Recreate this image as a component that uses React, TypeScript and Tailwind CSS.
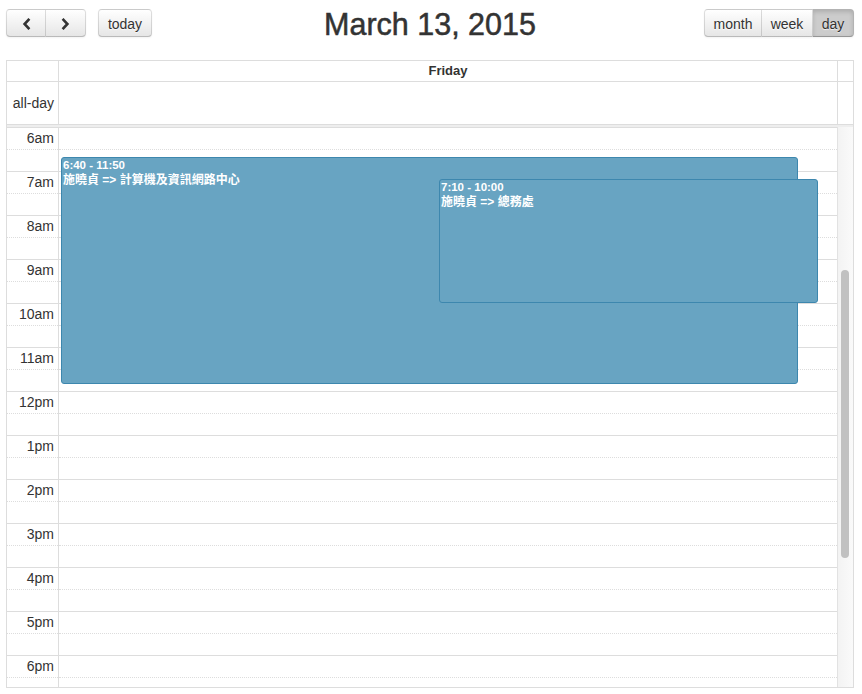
import React from 'react';

const hours = ['6am','7am','8am','9am','10am','11am','12pm','1pm','2pm','3pm','4pm','5pm','6pm'];

const btnBase =
  'h-[28px] pt-[2px] text-[14px] text-[#333] border border-[rgba(0,0,0,0.12)] border-b-[rgba(0,0,0,0.27)] shadow-[inset_0_1px_0_rgba(255,255,255,0.2),0_1px_2px_rgba(0,0,0,0.05)] flex items-center justify-center leading-none [text-shadow:0_1px_1px_rgba(255,255,255,0.75)]';
const btnNormal = 'bg-linear-to-b from-white to-[#e6e6e6]';
const btnActive = 'bg-[#cccccc] shadow-[inset_0_2px_4px_rgba(0,0,0,0.15),0_1px_2px_rgba(0,0,0,0.05)]';

function Chevron({ dir }: { dir: 'left' | 'right' }) {
  return (
    <svg width="9" height="12" viewBox="0 0 9 12" fill="none">
      {dir === 'left' ? (
        <path d="M6.5 1.8 L2.6 6 L6.5 10.2" stroke="#333" strokeWidth="2.6" strokeLinecap="square" strokeLinejoin="miter" />
      ) : (
        <path d="M2.5 1.8 L6.4 6 L2.5 10.2" stroke="#333" strokeWidth="2.6" strokeLinecap="square" strokeLinejoin="miter" />
      )}
    </svg>
  );
}

function Slots({ labels }: { labels: boolean }) {
  return (
    <>
      {hours.map((h) => (
        <React.Fragment key={h}>
          <div className="h-[22px] border-t border-[#dddddd] box-border">
            {labels && (
              <div className="text-right pr-[4px] text-[14px] leading-[20px] text-[#333] whitespace-nowrap">{h}</div>
            )}
          </div>
          <div className="h-[22px] border-t border-dotted border-[#dddddd] box-border" />
        </React.Fragment>
      ))}
    </>
  );
}

export default function App() {
  return (
    <div
      className="w-[862px] h-[694px] overflow-hidden bg-white text-[#333]"
      style={{ fontFamily: '"Liberation Sans", "Noto Sans CJK TC", Arial, sans-serif' }}
    >
      {/* Toolbar */}
      <div className="grid grid-cols-[1fr_auto_1fr] items-center pl-[6px] pr-[8px] pt-[8px] h-[36px] mb-[24px]">
        <div className="flex items-center gap-[12px]">
          <div className="flex">
            <button className={`${btnBase} ${btnNormal} w-[40px] rounded-l-[4px]`}>
              <Chevron dir="left" />
            </button>
            <button className={`${btnBase} ${btnNormal} w-[40px] rounded-r-[4px] border-l-0`}>
              <Chevron dir="right" />
            </button>
          </div>
          <button className={`${btnBase} ${btnNormal} w-[54px] rounded-[4px]`}>today</button>
        </div>
        <h2 className="text-[30.5px] leading-[28px] pt-[2px] font-normal text-[#333] [-webkit-text-stroke:0.5px_#333]">March 13, 2015</h2>
        <div className="flex justify-end">
          <button className={`${btnBase} ${btnNormal} w-[58px] rounded-l-[4px]`}>month</button>
          <button className={`${btnBase} ${btnNormal} w-[51px] border-l-0`}>week</button>
          <button className={`${btnBase} ${btnActive} w-[41px] rounded-r-[4px] border-l-0`}>day</button>
        </div>
      </div>

      {/* Calendar table */}
      <div className="mx-[6px] w-[848px] border border-[#dddddd] box-border">
        {/* Header row */}
        <div className="flex h-[21px] border-b border-[#dddddd] box-border">
          <div className="w-[52px] border-r border-[#dddddd] box-border" />
          <div className="flex-1 text-center text-[13px] font-bold leading-[20px]">Friday</div>
          <div className="w-[16px] border-l border-[#dddddd] box-border" />
        </div>
        {/* All-day row */}
        <div className="flex h-[42px]">
          <div className="w-[52px] border-r border-[#dddddd] box-border flex items-center justify-end pr-[4px] text-[14px]">
            all-day
          </div>
          <div className="flex-1" />
          <div className="w-[16px] border-l border-[#dddddd] box-border" />
        </div>
        {/* Divider */}
        <div className="h-[3px] border-t border-[#dddddd] bg-[#eeeeee] box-border" />
        {/* Scroller */}
        <div className="flex h-[560px] overflow-hidden">
          <div className="w-[52px] border-r border-[#dddddd] box-border">
            <Slots labels />
          </div>
          <div className="flex-1 relative">
            <Slots labels={false} />
            {/* Events */}
            <div className="absolute left-[2px] top-[30px] w-[737px] h-[227px] bg-[#68a4c2] border border-[#3d87ae] rounded-[3px] text-white px-[1px] overflow-hidden">
              <div className="text-[11.5px] font-bold leading-[14px] whitespace-nowrap">6:40 - 11:50</div>
              <div className="text-[12px] font-bold leading-[16px] whitespace-nowrap">施曉貞 =&gt; 計算機及資訊網路中心</div>
            </div>
            <div className="absolute left-[380px] top-[52px] w-[379px] h-[124px] bg-[#68a4c2] border border-[#3d87ae] rounded-[3px] text-white px-[1px] overflow-hidden">
              <div className="text-[11.5px] font-bold leading-[14px] whitespace-nowrap">7:10 - 10:00</div>
              <div className="text-[12px] font-bold leading-[16px] whitespace-nowrap">施曉貞 =&gt; 總務處</div>
            </div>
          </div>
          {/* Scrollbar */}
          <div className="w-[16px] border-l border-[#e2e2e2] box-border bg-linear-to-r from-[#f3f3f3] to-[#fafafa] flex flex-col">
            <div className="h-[143px]" />
            <div className="ml-[3px] w-[8px] h-[288px] rounded-full bg-[#c1c1c1]" />
          </div>
        </div>
      </div>
    </div>
  );
}
